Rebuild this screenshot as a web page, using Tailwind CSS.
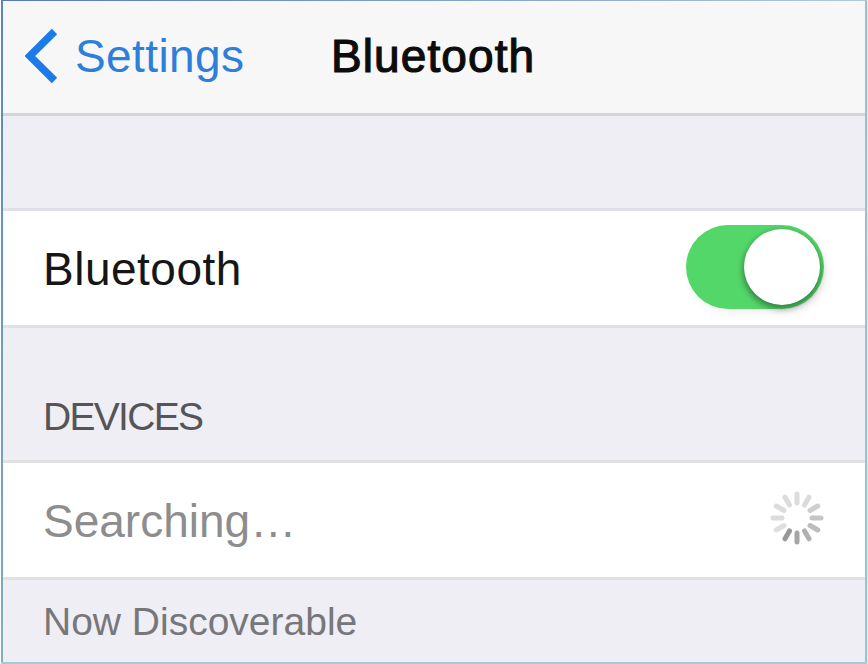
<!DOCTYPE html>
<html lang="en">
<head>
<meta charset="utf-8">
<title>Bluetooth</title>
<script src="https://cdn.jsdelivr.net/npm/@tailwindcss/browser@4"></script>
</head>
<body class="bg-white">
<div class="relative flex h-[664px] w-[868px] flex-col overflow-hidden bg-[#efeef4] font-['Liberation_Sans',Arial,sans-serif] leading-none whitespace-nowrap">
  <header class="flex h-[116px] shrink-0 items-start border-b-3 border-[#d5d4d8] bg-[#f7f7f7] pl-[25px]">
    <svg class="mt-[28px] h-[56px] w-[34px] shrink-0" viewBox="0 0 34 56" fill="none" stroke="#1c7be6" stroke-width="7.5"><path d="M29.500 3.500 4.800 28 29.500 52.500"/></svg>
    <a class="mt-[33px] ml-[16px] w-[256px] text-[46px] tracking-[0.4px] text-[#2e7fda]">Settings</a>
    <h1 class="mt-[33px] text-[46px] tracking-[1.1px] text-[#0c0c0c] [-webkit-text-stroke:1.2px_#0c0c0c]">Bluetooth</h1>
  </header>
  <div class="h-[92px] shrink-0"></div>
  <section class="flex h-[120px] shrink-0 items-center justify-between border-y-3 border-[#e1e0e6] bg-white pr-[44px] pl-[43px]">
    <span class="pt-[2px] text-[46px] tracking-[0.5px] text-[#161616]">Bluetooth</span>
    <span class="mb-[2px] flex h-[84px] w-[138px] items-center justify-end rounded-full bg-[#53d769] pr-[4px] shadow-[4px_5px_8px_rgba(0,0,0,0.05)]">
      <span class="size-[76px] rounded-full bg-white shadow-[0_3px_6px_1px_rgba(0,0,0,0.4)]"></span>
    </span>
  </section>
  <h2 class="flex h-[132px] shrink-0 items-end pb-[24px] pl-[43px] text-[39px] tracking-[-1.7px] text-[#555558]">DEVICES</h2>
  <section class="flex h-[120px] shrink-0 items-center justify-between border-y-3 border-[#e1e0e3] bg-white pr-[43px] pl-[43px]">
    <span class="pt-[2px] text-[46px] text-[#8d8d8d]">Searching…</span>
    <svg class="mb-[4px] h-[56px] w-[56px]" viewBox="-28 -28 56 56" stroke-width="5" stroke-linecap="round">
      <path d="M0-15V-24" stroke="#dcdcdc"/>
      <path d="M0-15V-24" stroke="#dadada" transform="rotate(30)"/>
      <path d="M0-15V-24" stroke="#cecece" transform="rotate(60)"/>
      <path d="M0-15V-24" stroke="#c5c5c5" transform="rotate(90)"/>
      <path d="M0-15V-24" stroke="#bcbcbc" transform="rotate(120)"/>
      <path d="M0-15V-24" stroke="#b0b0b0" transform="rotate(150)"/>
      <path d="M0-15V-24" stroke="#a6a6a6" transform="rotate(180)"/>
      <path d="M0-15V-24" stroke="#989898" transform="rotate(210)"/>
      <path d="M0-15V-24" stroke="#dfdfdf" transform="rotate(240)"/>
      <path d="M0-15V-24" stroke="#dcdcdc" transform="rotate(270)"/>
      <path d="M0-15V-24" stroke="#dcdcdc" transform="rotate(300)"/>
      <path d="M0-15V-24" stroke="#dcdcdc" transform="rotate(330)"/>
    </svg>
  </section>
  <p class="pt-[22px] pl-[43px] text-[39px] text-[#77777b]">Now Discoverable</p>
  <div class="pointer-events-none absolute top-0 left-[1px] h-full w-[2px] bg-linear-to-b from-[#5a85be] to-[#82aebb]"></div>
  <div class="pointer-events-none absolute top-0 right-0 h-full w-[3px] border-r border-[#dceaf0] bg-linear-to-b from-[#9fbcc9] to-[#9ac5d1]"></div>
  <div class="pointer-events-none absolute top-0 left-[1px] h-[1px] w-[866px] bg-linear-to-r from-[#5578b8] to-[#b0c8d8]"></div>
  <div class="pointer-events-none absolute bottom-0 left-[1px] h-[2px] w-[866px] bg-[#a3ccd8]"></div>
  <div class="pointer-events-none absolute top-0 left-0 h-full w-px bg-white"></div>
</div>
</body>
</html>
